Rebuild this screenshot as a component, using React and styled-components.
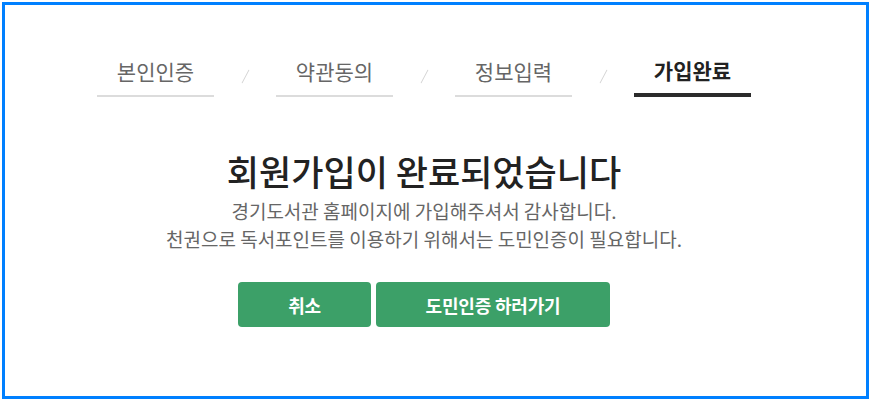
import styled, { createGlobalStyle } from "styled-components";

const GlobalStyle = createGlobalStyle`
  html, body {
    margin: 0;
    padding: 0;
    background: #fff;
  }
  body {
    font-family: "Noto Sans CJK KR", "Noto Sans", sans-serif;
  }
`;

const Frame = styled.div`
  box-sizing: border-box;
  margin: 2px;
  width: 867px;
  height: 397px;
  border: 3px solid #0080ff;
  padding: 45px 23px 0 0;
`;

const Steps = styled.ul`
  list-style: none;
  margin: 0;
  padding: 0;
  display: flex;
  justify-content: center;
  align-items: flex-end;
`;

const Step = styled.li`
  width: 117px;
  height: 47px;
  box-sizing: border-box;
  display: flex;
  justify-content: center;
  align-items: flex-start;
  padding-top: ${(p) => (p.$active ? "5px" : "6px")};
  font-size: 21px;
  line-height: 30px;
  font-weight: ${(p) => (p.$active ? 700 : 400)};
  color: ${(p) => (p.$active ? "#222" : "#666")};
  border-bottom: ${(p) => (p.$active ? "4px solid #2b2b2b" : "2px solid #dcdcdc")};
`;

const Slash = styled.li`
  width: 62px;
  height: 47px;
  display: flex;
  justify-content: center;
  padding-top: 19px;
  box-sizing: border-box;

  &::before {
    content: "";
    display: block;
    width: 1px;
    height: 15px;
    background: #d4d4d4;
    transform: rotate(28deg);
  }
`;

const Content = styled.div`
  display: flex;
  flex-direction: column;
  align-items: center;
  margin-top: 51px;
`;

const Title = styled.h2`
  margin: 0;
  font-size: 35px;
  font-weight: 500;
  line-height: 46px;
  color: #222;
`;

const Desc = styled.p`
  margin: 3px 0 0;
  font-size: 19px;
  line-height: 28px;
  color: #666;
  text-align: center;
`;

const Buttons = styled.div`
  display: flex;
  gap: 5px;
  margin-top: 29px;
`;

const Button = styled.button`
  width: ${(p) => p.$w}px;
  height: 45px;
  border: 0;
  border-radius: 4px;
  background: #3ca068;
  color: #fff;
  font-family: inherit;
  font-size: 18px;
  font-weight: 700;
  letter-spacing: -0.2px;
  cursor: pointer;
`;

const steps = ["본인인증", "약관동의", "정보입력", "가입완료"];

export default function App() {
  return (
    <>
      <GlobalStyle />
      <Frame>
        <Steps>
          {steps.map((s, i) => [
            i > 0 && <Slash key={"s" + i} />,
            <Step key={s} $active={i === steps.length - 1}>
              {s}
            </Step>,
          ])}
        </Steps>
        <Content>
          <Title>회원가입이 완료되었습니다</Title>
          <Desc>
            경기도서관 홈페이지에 가입해주셔서 감사합니다.
            <br />
            천권으로 독서포인트를 이용하기 위해서는 도민인증이 필요합니다.
          </Desc>
          <Buttons>
            <Button $w={133}>취소</Button>
            <Button $w={234}>도민인증 하러가기</Button>
          </Buttons>
        </Content>
      </Frame>
    </>
  );
}
